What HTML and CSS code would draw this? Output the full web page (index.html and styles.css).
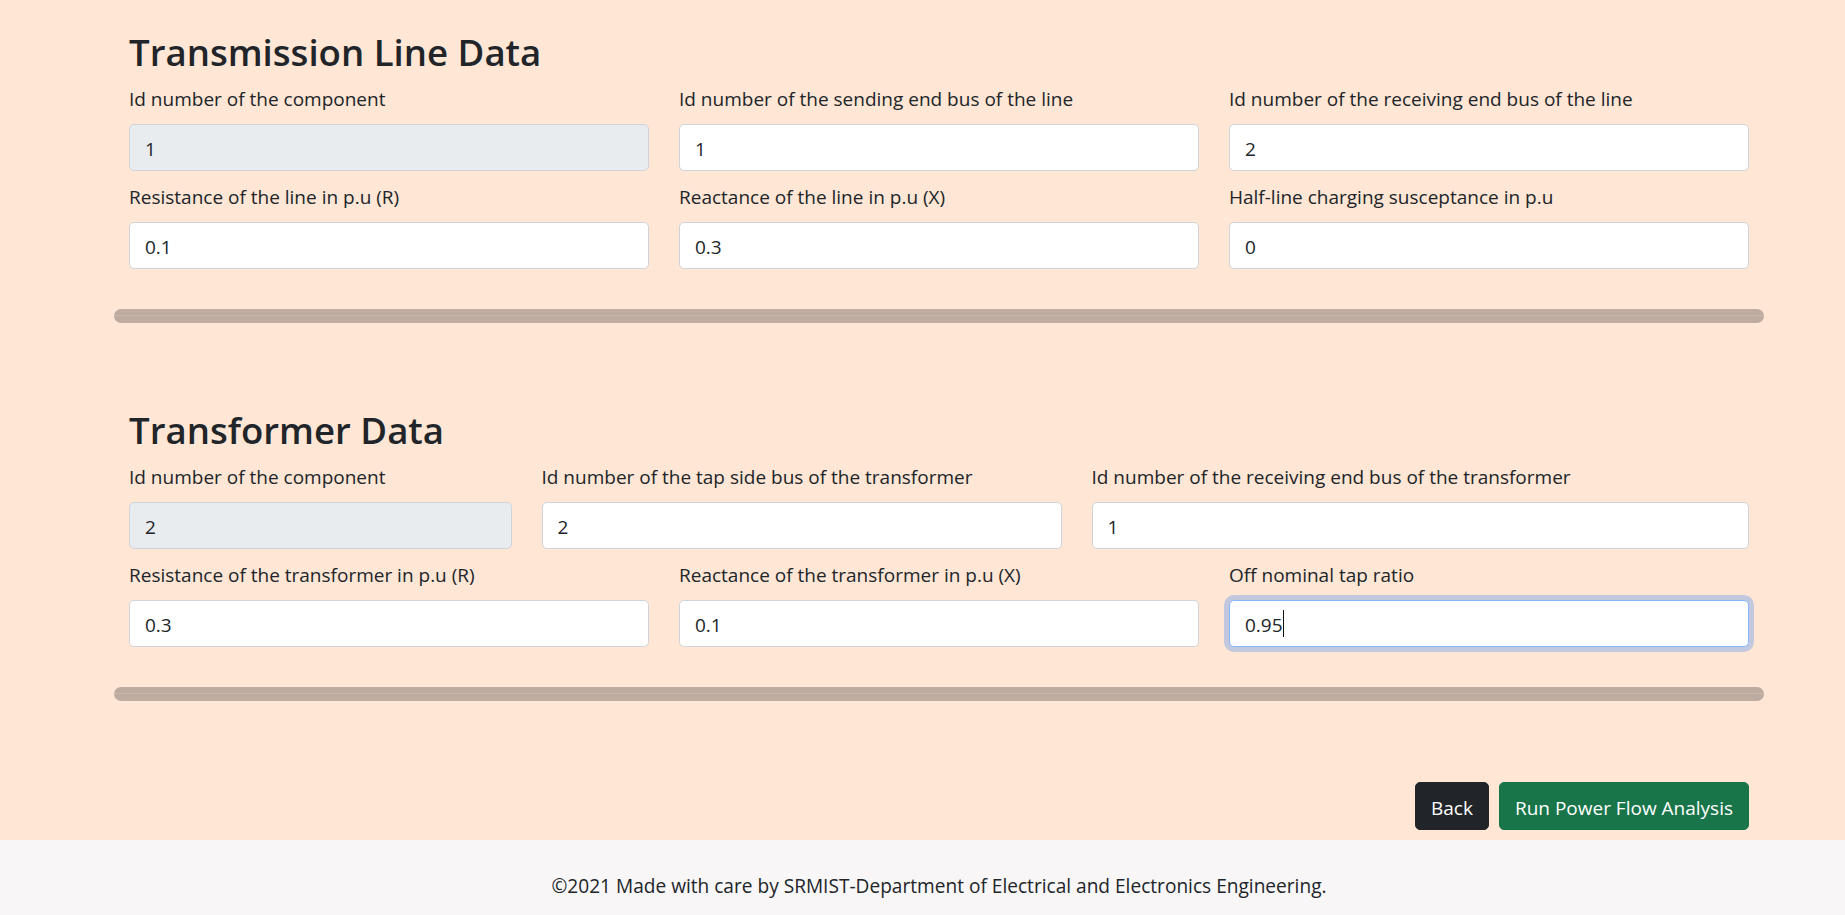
FILE: index.html
```html
<!DOCTYPE html>
<html lang="en">
<head>
<meta charset="utf-8">
<title>Power Flow Data</title>
<link rel="stylesheet" href="styles.css">
</head>
<body>
<main class="page">
  <div class="container">
    <section class="data-section">
      <h2 class="section-title">Transmission Line Data</h2>
      <div class="field-grid">
        <div class="field span-4">
          <label class="field-label">Id number of the component</label>
          <input class="form-control" type="text" value="1" disabled>
        </div>
        <div class="field span-4">
          <label class="field-label">Id number of the sending end bus of the line</label>
          <input class="form-control" type="text" value="1">
        </div>
        <div class="field span-4">
          <label class="field-label">Id number of the receiving end bus of the line</label>
          <input class="form-control" type="text" value="2">
        </div>
        <div class="field span-4">
          <label class="field-label">Resistance of the line in p.u (R)</label>
          <input class="form-control" type="text" value="0.1">
        </div>
        <div class="field span-4">
          <label class="field-label">Reactance of the line in p.u (X)</label>
          <input class="form-control" type="text" value="0.3">
        </div>
        <div class="field span-4">
          <label class="field-label">Half-line charging susceptance in p.u</label>
          <input class="form-control" type="text" value="0">
        </div>
      </div>
    </section>
    <hr class="divider">

    <section class="data-section later">
      <h2 class="section-title">Transformer Data</h2>
      <div class="field-grid">
        <div class="field span-3">
          <label class="field-label">Id number of the component</label>
          <input class="form-control" type="text" value="2" disabled>
        </div>
        <div class="field span-4">
          <label class="field-label">Id number of the tap side bus of the transformer</label>
          <input class="form-control" type="text" value="2">
        </div>
        <div class="field span-5">
          <label class="field-label">Id number of the receiving end bus of the transformer</label>
          <input class="form-control" type="text" value="1">
        </div>
        <div class="field span-4">
          <label class="field-label">Resistance of the transformer in p.u (R)</label>
          <input class="form-control" type="text" value="0.3">
        </div>
        <div class="field span-4">
          <label class="field-label">Reactance of the transformer in p.u (X)</label>
          <input class="form-control" type="text" value="0.1">
        </div>
        <div class="field span-4">
          <label class="field-label">Off nominal tap ratio</label>
          <div class="input-wrap">
            <input class="form-control is-focused" type="text" value="0.95">
            <span class="caret"></span>
          </div>
        </div>
      </div>
    </section>
    <hr class="divider">

    <div class="actions">
      <button class="btn btn-dark" type="button">Back</button>
      <button class="btn btn-success" type="button">Run Power Flow Analysis</button>
    </div>
  </div>
</main>
<footer class="site-footer">
  <div class="container">
    <p class="footer-text">©2021 Made with care by SRMIST-Department of Electrical and Electronics Engineering.</p>
  </div>
</footer>
</body>
</html>
```

FILE: styles.css
```css
* {
  box-sizing: border-box;
}

html, body {
  margin: 0;
  padding: 0;
}

body {
  font-family: "Open Sans", "Noto Sans", "Liberation Sans", sans-serif;
  font-size: 19px;
  color: #212529;
  background: #ffe6d5;
  overflow: hidden;
}

.page {
  background: #ffe6d5;
  padding-top: 30px;
  padding-bottom: 10px;
}

.container {
  width: 1650px;
  margin-left: 114px;
  padding: 0 15px;
}

.section-title {
  margin: 0 0 10px;
  font-size: 36.6px;
  line-height: 44px;
  font-weight: 600;
  color: #212529;
}

.data-section.later {
  margin-top: 84.5px;
}

.field-grid {
  display: grid;
  grid-template-columns: repeat(12, 1fr);
  column-gap: 30px;
  row-gap: 11px;
}

.span-3 { grid-column: span 3; }
.span-4 { grid-column: span 4; }
.span-5 { grid-column: span 5; }

.field-label {
  display: block;
  line-height: 30px;
  margin-bottom: 10px;
  white-space: nowrap;
}

.form-control {
  display: block;
  width: 100%;
  height: 47px;
  padding: 3px 15px 0;
  font-family: inherit;
  font-size: 19px;
  color: #212529;
  background: #fff;
  border: 1px solid #ced4da;
  border-radius: 5px;
  outline: none;
}

.form-control:disabled {
  background: #e9ecef;
  opacity: 1;
}

.form-control.is-focused {
  border-color: #86b7fe;
  box-shadow: 0 0 0 5px rgba(13, 110, 253, 0.25);
}

.input-wrap {
  position: relative;
}

.caret {
  position: absolute;
  left: 54px;
  top: 10px;
  width: 1px;
  height: 27px;
  background: #111;
}

.divider {
  margin: 40px -15px 0;
  height: 14px;
  border: none;
  border-radius: 7px;
  background:
    linear-gradient(to bottom, transparent 6px, rgba(255, 255, 255, 0.12) 6px, rgba(255, 255, 255, 0.12) 7px, transparent 7px),
    #bfaca0;
}

.actions {
  margin-top: 81.5px;
  display: flex;
  justify-content: flex-end;
  gap: 10px;
}

.btn {
  height: 48px;
  padding: 3px 15px 0;
  font-family: inherit;
  font-size: 19px;
  color: #fff;
  border: 1px solid transparent;
  border-radius: 5px;
}

.btn-dark {
  background: #212529;
  border-color: #212529;
}

.btn-success {
  background: #18754a;
  border-color: #18754a;
}

.site-footer {
  background: #f8f6f7;
  height: 75px;
  padding-top: 31px;
}

.footer-text {
  margin: 0;
  text-align: center;
  line-height: 30px;
  font-size: 19.1px;
}
```
